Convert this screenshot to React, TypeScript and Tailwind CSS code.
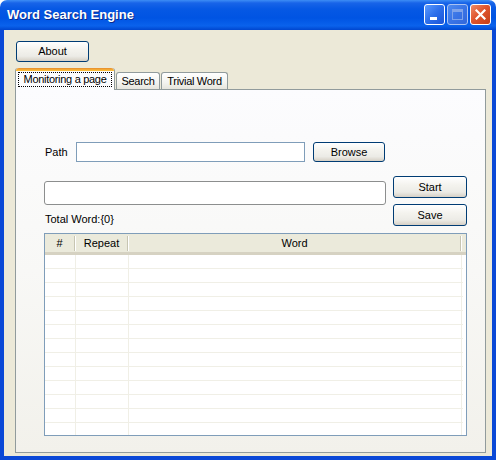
import React from "react";

const font = { fontFamily: '"Liberation Sans", Arial, sans-serif' };

function XPButton({ label, className = "" }: { label: string; className?: string }) {
  return (
    <div
      className={`flex items-center justify-center rounded-[3px] border border-[#003C74] bg-[linear-gradient(180deg,#FFFFFF_0%,#F4F3EE_40%,#ECEBE6_75%,#D6D0C5_100%)] text-[11px] text-black ${className}`}
    >
      {label}
    </div>
  );
}

function HeaderCell({ label, className = "" }: { label: string; className?: string }) {
  return (
    <div className={`flex items-center ${className}`}>
      <div className="flex flex-1 items-center justify-center">{label}</div>
      <div className="my-[3px] h-[15px] w-[2px] border-l border-r border-l-[#C7C5B2] border-r-white" />
    </div>
  );
}

export default function App() {
  const rows = Array.from({ length: 13 });
  return (
    <div className="w-[496px] h-[460px] bg-white" style={font}>
      <div className="flex h-full w-full flex-col overflow-hidden rounded-t-[7px]">
        {/* Title bar */}
        <div className="flex h-[30px] shrink-0 items-center bg-[linear-gradient(180deg,#3D8DF5_0%,#1864E8_10%,#0658E4_30%,#0054E3_60%,#0A62EC_86%,#0046CF_100%)] pl-[7px] pr-[5px]">
          <span className="flex-1 text-[13px] font-bold text-white [text-shadow:1px_1px_0_#0A2A8C]">
            Word Search Engine
          </span>
          <div className="flex gap-[2px] pb-[1px]">
            <div className="relative h-[21px] w-[21px] rounded-[3px] border border-white bg-[linear-gradient(135deg,#5B9BFF_0%,#2C6EEA_50%,#1B54D8_100%)]">
              <div className="absolute left-[5px] top-[12px] h-[3px] w-[7px] bg-white" />
            </div>
            <div className="relative h-[21px] w-[21px] rounded-[3px] border border-[#A9C2F2] bg-[linear-gradient(135deg,#4F8BF0_0%,#3A74E6_50%,#3167DB_100%)]">
              <div className="absolute left-[4px] top-[4px] h-[11px] w-[11px] border border-t-[3px] border-[#7FA3EA]" />
            </div>
            <div className="flex h-[21px] w-[21px] items-center justify-center rounded-[3px] border border-white bg-[linear-gradient(135deg,#EE8B68_0%,#E0552E_45%,#C43E18_100%)]">
              <svg width="11" height="11" viewBox="0 0 11 11">
                <path d="M1.5 1.5 L9.5 9.5 M9.5 1.5 L1.5 9.5" stroke="white" strokeWidth="2.2" strokeLinecap="square" />
              </svg>
            </div>
          </div>
        </div>

        {/* Body */}
        <div className="flex flex-1 flex-col border-x-4 border-b-4 border-[#0A48D6] bg-[#ECE9D8]">
          <XPButton label="About" className="ml-[12px] mt-[11px] h-[21px] w-[73px]" />

          {/* Tabs */}
          <div className="ml-[11px] mt-[6px] flex h-[21px] items-end tracking-[-0.3px]">
            <div className="relative z-10 mb-[-1px] flex h-[22px] w-[100px] flex-col rounded-t-[3px] border-x border-[#919B9C] bg-[#FCFCFE]">
              <div className="h-[3px] rounded-t-[3px] bg-[linear-gradient(180deg,#E68B2C_0%,#FFC73C_100%)]" />
              <div className="mx-[2px] mt-[1px] flex h-[15px] items-center justify-center border border-dotted border-black text-[11px] text-black">
                Monitoring a page
              </div>
            </div>
            <div className="ml-[1px] flex h-[17px] w-[44px] items-center justify-center rounded-t-[3px] border border-b-0 border-[#919B9C] bg-[linear-gradient(180deg,#FFFFFF_0%,#F3F3EF_60%,#E6E5DD_100%)] text-[11px] text-black">
              Search
            </div>
            <div className="ml-[1px] flex h-[17px] w-[67px] items-center justify-center rounded-t-[3px] border border-b-0 border-[#919B9C] bg-[linear-gradient(180deg,#FFFFFF_0%,#F3F3EF_60%,#E6E5DD_100%)] text-[11px] text-black">
              Trivial Word
            </div>
          </div>

          {/* Panel */}
          <div className="ml-[11px] h-[364px] w-[471px] border border-[#919B9C] bg-[linear-gradient(180deg,#FCFCFE_0%,#F8F8F6_50%,#F2F1EB_100%)] pl-[28px] pt-[52px]">
            <div className="flex h-[20px] items-center">
              <span className="ml-[1px] w-[31px] text-[11px] text-black">Path</span>
              <div className="h-[20px] w-[229px] border border-[#7F9DB9] bg-white" />
              <XPButton label="Browse" className="ml-[8px] h-[20px] w-[72px]" />
            </div>

            <div className="mt-[14px] flex">
              <div className="flex flex-col">
                <div className="mt-[5px] h-[24px] w-[342px] rounded-[3px] border border-[#8C8E8E] bg-white" />
                <span className="ml-[1px] mt-[8px] text-[11px] leading-[13px] text-black">Total Word:{"{0}"}</span>
              </div>
              <div className="ml-[7px] flex flex-col">
                <XPButton label="Start" className="h-[22px] w-[74px]" />
                <XPButton label="Save" className="mt-[6px] h-[22px] w-[74px]" />
              </div>
            </div>

            {/* List view */}
            <div className="mt-[7px] flex h-[203px] w-[423px] flex-col overflow-hidden border border-[#7F9DB9] bg-white">
              <div className="flex h-[21px] shrink-0 border-b-[3px] border-[#D6D2C2] bg-[#EBEADB] text-[11px] text-black">
                <HeaderCell label="#" className="w-[31px]" />
                <HeaderCell label="Repeat" className="w-[53px]" />
                <HeaderCell label="Word" className="w-[333px]" />
              </div>
              <div className="flex flex-col">
                {rows.map((_, i) => (
                  <div key={i} className="flex h-[14px] shrink-0 border-b border-[#F0EFE6] w-[418px]">
                    <div className="w-[31px] border-r border-[#F0EFE6]" />
                    <div className="w-[53px] border-r border-[#F0EFE6]" />
                    <div className="w-[333px] border-r border-[#F0EFE6]" />
                  </div>
                ))}
              </div>
            </div>
          </div>
        </div>
      </div>
    </div>
  );
}
